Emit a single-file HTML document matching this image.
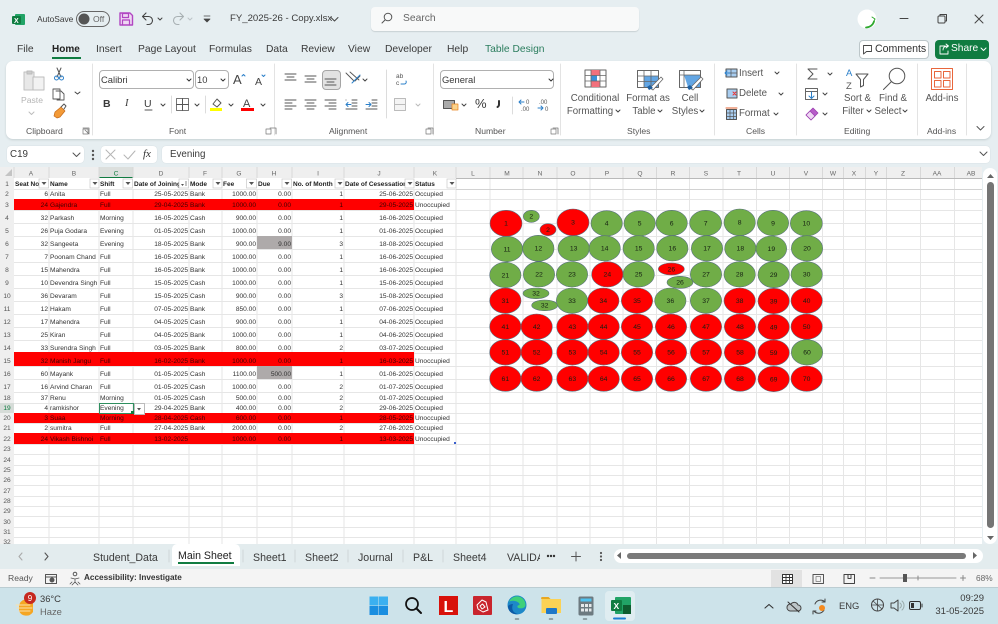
<!DOCTYPE html>
<html><head><meta charset="utf-8"><title>FY_2025-26 - Copy.xlsx</title>
<style>
html,body{margin:0;padding:0;background:#e6eef1}
#p{position:relative;width:998px;height:624px;overflow:hidden;background:#e6eef1;font-family:"Liberation Sans",sans-serif;color:#3a3a3a;filter:blur(.35px)}
.a{position:absolute}
.t{position:absolute;white-space:nowrap;font-size:10.3px;line-height:12px}
.c{transform:translateX(-50%);text-align:center}
.l{font-size:8.6px;color:#555;top:125px}
.f{font-size:9.7px;color:#555}
#sheet{position:absolute;left:0;top:167px;width:982px;height:377px;overflow:hidden;background:#fff}
table{position:absolute;left:0;top:11px;border-collapse:collapse;table-layout:fixed;width:456px}
td{padding:0 1px 0 1px;vertical-align:bottom;font-size:6.6px;line-height:8px;white-space:nowrap;overflow:hidden;color:#333}
td.n{text-align:right}
td:first-child{background:#efefef;text-align:center;color:#555;font-size:6.6px;padding:0}
tr.r td:not(:first-child):not(:last-child){background:#f00;color:#400000}
tr.h td{font-weight:bold;color:#222;background:#fff;font-size:6.5px}
tr.h td:first-child{background:#efefef;font-weight:normal;color:#555}
svg{position:absolute;left:0;top:0}
</style></head><body><div id="p">

<!-- Ribbon card & boxes -->
<div class="a" style="left:6px;top:61px;width:985px;height:78px;background:#fff;border-radius:7px;box-shadow:0 1px 2px #c5cfd2"></div>
<div class="a" style="left:371px;top:7px;width:268px;height:24px;background:#f8f9f9;border-radius:4px;box-shadow:0 1px 1px #c8d0d3"></div>
<div class="a" style="left:859px;top:40px;width:68px;height:17px;background:#fff;border:1px solid #bcc6c9;border-radius:4px"></div>
<div class="a" style="left:935px;top:40px;width:54px;height:19px;background:#107c41;border-radius:4px"></div>
<div class="a" style="left:99px;top:70px;width:93px;height:17px;border:1px solid #b0b0b0;border-radius:4px"></div>
<div class="a" style="left:195px;top:70px;width:32px;height:17px;border:1px solid #b0b0b0;border-radius:4px"></div>
<div class="a" style="left:322px;top:70px;width:17px;height:18px;border:1px solid #a5a5a5;border-radius:4px;background:#e2e2e2"></div>
<div class="a" style="left:440px;top:70px;width:112px;height:17px;border:1px solid #b0b0b0;border-radius:4px"></div>
<div class="a" style="left:7px;top:146px;width:77px;height:17px;background:#fff;border-radius:4px;box-shadow:0 0 1px #c5cfd2"></div>
<div class="a" style="left:101px;top:146px;width:56px;height:17px;background:#fff;border-radius:4px;box-shadow:0 0 1px #c5cfd2"></div>
<div class="a" style="left:162px;top:146px;width:828px;height:17px;background:#fff;border-radius:4px;box-shadow:0 0 1px #c5cfd2"></div>

<!-- Title text -->
<span class="t" style="left:37px;top:13px;font-size:8.4px">AutoSave</span>
<span class="t" style="left:93px;top:13px;font-size:8.6px;color:#666">Off</span>
<span class="t" style="left:230px;top:13px;font-size:9.6px">FY_2025-26 - Copy.xlsx</span>
<span class="t" style="left:403px;top:13px;font-size:10.3px;color:#666">Search</span>

<!-- Tabs -->
<span class="t" style="left:17px;top:44px">File</span>
<span class="t" style="left:52px;top:44px;font-weight:bold;font-size:10px;color:#222">Home</span>
<div class="a" style="left:52px;top:57px;width:29px;height:1.5px;background:#107c41"></div>
<span class="t" style="left:96px;top:44px">Insert</span>
<span class="t" style="left:138px;top:44px">Page Layout</span>
<span class="t" style="left:209px;top:44px">Formulas</span>
<span class="t" style="left:266px;top:44px">Data</span>
<span class="t" style="left:301px;top:44px">Review</span>
<span class="t" style="left:348px;top:44px">View</span>
<span class="t" style="left:385px;top:44px">Developer</span>
<span class="t" style="left:447px;top:44px">Help</span>
<span class="t" style="left:485px;top:44px;color:#2b7d5e">Table Design</span>
<span class="t" style="left:875px;top:43px;font-size:10.6px;color:#333">Comments</span>
<span class="t" style="left:951px;top:43px;font-size:10.2px;color:#fff">Share</span>

<!-- Ribbon text -->
<span class="t" style="left:21px;top:94px;font-size:8.6px;color:#b5b5b5">Paste</span>
<span class="t" style="left:101px;top:74px;font-size:9.4px">Calibri</span>
<span class="t" style="left:197px;top:74px;font-size:9.4px">10</span>
<span class="t" style="left:442px;top:74px;font-size:9.4px">General</span>
<span class="t" style="left:103px;top:98px;font-weight:bold;font-size:10.5px">B</span>
<span class="t" style="left:125px;top:98px;font-style:italic;font-size:10.5px;font-family:'Liberation Serif',serif">I</span>
<span class="t" style="left:144px;top:98px;font-size:10.5px">U</span>
<span class="t" style="left:475px;top:98px;font-size:13px">%</span>

<span class="t f" style="left:595px;top:93px;transform:translateX(-50%)">Conditional</span>
<span class="t f" style="left:590px;top:106px;transform:translateX(-50%)">Formatting</span>
<span class="t f" style="left:648px;top:93px;transform:translateX(-50%)">Format as</span>
<span class="t f" style="left:644px;top:106px;transform:translateX(-50%)">Table</span>
<span class="t f" style="left:690px;top:93px;transform:translateX(-50%)">Cell</span>
<span class="t f" style="left:685px;top:106px;transform:translateX(-50%)">Styles</span>
<span class="t f" style="left:739px;top:68px">Insert</span>
<span class="t f" style="left:739px;top:88px">Delete</span>
<span class="t f" style="left:739px;top:108px">Format</span>
<span class="t f" style="left:857.5px;top:93px;transform:translateX(-50%)">Sort &amp;</span>
<span class="t f" style="left:853px;top:106px;transform:translateX(-50%)">Filter</span>
<span class="t f" style="left:893px;top:93px;transform:translateX(-50%)">Find &amp;</span>
<span class="t f" style="left:888px;top:106px;transform:translateX(-50%)">Select</span>
<span class="t f" style="left:942px;top:93px;transform:translateX(-50%)">Add-ins</span>

<span class="t l" style="left:26px">Clipboard</span>
<span class="t l" style="left:169px">Font</span>
<span class="t l" style="left:329px">Alignment</span>
<span class="t l" style="left:475px">Number</span>
<span class="t l" style="left:627px">Styles</span>
<span class="t l" style="left:746px">Cells</span>
<span class="t l" style="left:844px">Editing</span>
<span class="t l" style="left:927px">Add-ins</span>

<!-- Formula bar text -->
<span class="t" style="left:10px;top:149px;font-size:9.8px">C19</span>
<span class="t" style="left:170px;top:149px;font-size:9.8px">Evening</span>
<span class="t" style="left:143px;top:148px;font-size:11px;font-style:italic;font-family:'Liberation Serif',serif;color:#333">fx</span>

<!-- Sheet -->
<div id="sheet">
<svg width="982" height="377" style="left:0;top:0">
<rect x="0" y="0" width="982" height="11" fill="#efefef"/>
<rect x="99" y="0" width="34" height="11" fill="#dcdfdd"/>
<rect x="0" y="0" width="14" height="377" fill="#efefef"/>
<g stroke="#e6e6e6" stroke-width="1" fill="none">
<path d="M49 11V377M99 11V377M133 11V377M189 11V377M222 11V377M257 11V377M292 11V377M344 11V377M414 11V377M456 11V377M490 11V377M523 11V377M557 11V377M590 11V377M623 11V377M656.500 11V377M689.500 11V377M723 11V377M756.500 11V377M789.500 11V377M822.500 11V377M843.500 11V377M865.500 11V377M886.500 11V377M920.500 11V377M954.500 11V377"/>
<path d="M14 22.500H982M14 32.500H982M14 43.500H982M14 56.500H982M14 69.500H982M14 82.500H982M14 95.500H982M14 108.500H982M14 121.500H982M14 134.500H982M14 147.500H982M14 160.500H982M14 173.500H982M14 186.500H982M14 199.500H982M14 212.500H982M14 225.500H982M14 236.500H982M14 246.500H982M14 256.500H982M14 266.500H982M14 277.500H982M14 287.500H982M14 298.500H982M14 308.500H982M14 318.500H982M14 329.500H982M14 339.500H982M14 349.500H982M14 360.500H982M14 370.500H982"/>
</g>
<path d="M14 11.500H982" stroke="#b9b9b9"/>
<path d="M456 22.500H982" stroke="#d2d2d2"/>
<path d="M99 10.500H133" stroke="#107c41"/>
<path d="M14 0V11M49 0V11M99 0V11M133 0V11M189 0V11M222 0V11M257 0V11M292 0V11M344 0V11M414 0V11M456 0V11M490 0V11M523 0V11M557 0V11M590 0V11M623 0V11M656.500 0V11M689.500 0V11M723 0V11M756.500 0V11M789.500 0V11M822.500 0V11M843.500 0V11M865.500 0V11M886.500 0V11M920.500 0V11M954.500 0V11" stroke="#d8d8d8"/>
<path d="M5 9L12 9L12 2Z" fill="#c4c4c4"/>
<g font-family="Liberation Sans,sans-serif" font-size="6.6" fill="#666" text-anchor="middle">
<text x="31" y="8.500">A</text><text x="74" y="8.500">B</text><text x="116" y="8.500" fill="#107c41">C</text><text x="161" y="8.500">D</text><text x="205" y="8.500">F</text><text x="239" y="8.500">G</text><text x="274" y="8.500">H</text><text x="318" y="8.500">I</text><text x="379" y="8.500">J</text><text x="435" y="8.500">K</text><text x="473" y="8.500">L</text><text x="507" y="8.500">M</text><text x="540" y="8.500">N</text><text x="573" y="8.500">O</text><text x="607" y="8.500">P</text><text x="640" y="8.500">Q</text><text x="673" y="8.500">R</text><text x="706" y="8.500">S</text><text x="739" y="8.500">T</text><text x="773" y="8.500">U</text><text x="806" y="8.500">V</text><text x="833" y="8.500">W</text><text x="854" y="8.500">X</text><text x="876" y="8.500">Y</text><text x="903" y="8.500">Z</text><text x="937" y="8.500">AA</text><text x="971" y="8.500">AB</text>
</g>
</svg>
<table>
<colgroup><col style="width:14px"><col style="width:35px"><col style="width:50px"><col style="width:34px"><col style="width:56px"><col style="width:33px"><col style="width:35px"><col style="width:35px"><col style="width:52px"><col style="width:70px"><col style="width:42px"></colgroup>
<tr class="h" style="height:11px"><td>1</td><td>Seat No</td><td>Name</td><td>Shift</td><td>Date of Joining</td><td>Mode</td><td>Fee</td><td>Due</td><td>No. of Month</td><td>Date of Cesessation</td><td>Status</td></tr>
<tr style="height:10px"><td>2</td><td class="n">6</td><td>Anita</td><td>Full</td><td class="n">25-05-2025</td><td>Bank</td><td class="n">1000.00</td><td class="n">0.00</td><td class="n">1</td><td class="n">25-06-2025</td><td>Occupied</td></tr>
<tr class="r" style="height:11px"><td>3</td><td class="n">24</td><td>Gajendra</td><td>Full</td><td class="n">29-04-2025</td><td>Bank</td><td class="n">1000.00</td><td class="n">0.00</td><td class="n">1</td><td class="n">29-05-2025</td><td>Unoccupied</td></tr>
<tr style="height:13px"><td>4</td><td class="n">32</td><td>Parkash</td><td>Morning</td><td class="n">16-05-2025</td><td>Cash</td><td class="n">900.00</td><td class="n">0.00</td><td class="n">1</td><td class="n">16-06-2025</td><td>Occupied</td></tr>
<tr style="height:13px"><td>5</td><td class="n">26</td><td>Puja Godara</td><td>Evening</td><td class="n">01-05-2025</td><td>Cash</td><td class="n">1000.00</td><td class="n">0.00</td><td class="n">1</td><td class="n">01-06-2025</td><td>Occupied</td></tr>
<tr style="height:13px"><td>6</td><td class="n">32</td><td>Sangeeta</td><td>Evening</td><td class="n">18-05-2025</td><td>Bank</td><td class="n">900.00</td><td class="n" style="background:#aeaaaa;color:#333">9.00</td><td class="n">3</td><td class="n">18-08-2025</td><td>Occupied</td></tr>
<tr style="height:13px"><td>7</td><td class="n">7</td><td>Poonam Chand</td><td>Full</td><td class="n">16-05-2025</td><td>Bank</td><td class="n">1000.00</td><td class="n">0.00</td><td class="n">1</td><td class="n">16-06-2025</td><td>Occupied</td></tr>
<tr style="height:13px"><td>8</td><td class="n">15</td><td>Mahendra</td><td>Full</td><td class="n">16-05-2025</td><td>Bank</td><td class="n">1000.00</td><td class="n">0.00</td><td class="n">1</td><td class="n">16-06-2025</td><td>Occupied</td></tr>
<tr style="height:13px"><td>9</td><td class="n">10</td><td>Devendra Singh</td><td>Full</td><td class="n">15-05-2025</td><td>Cash</td><td class="n">1000.00</td><td class="n">0.00</td><td class="n">1</td><td class="n">15-06-2025</td><td>Occupied</td></tr>
<tr style="height:13px"><td>10</td><td class="n">36</td><td>Devaram</td><td>Full</td><td class="n">15-05-2025</td><td>Cash</td><td class="n">900.00</td><td class="n">0.00</td><td class="n">3</td><td class="n">15-08-2025</td><td>Occupied</td></tr>
<tr style="height:13px"><td>11</td><td class="n">12</td><td>Hakam</td><td>Full</td><td class="n">07-05-2025</td><td>Bank</td><td class="n">850.00</td><td class="n">0.00</td><td class="n">1</td><td class="n">07-06-2025</td><td>Occupied</td></tr>
<tr style="height:13px"><td>12</td><td class="n">17</td><td>Mahendra</td><td>Full</td><td class="n">04-05-2025</td><td>Cash</td><td class="n">900.00</td><td class="n">0.00</td><td class="n">1</td><td class="n">04-06-2025</td><td>Occupied</td></tr>
<tr style="height:13px"><td>13</td><td class="n">25</td><td>Kiran</td><td>Full</td><td class="n">04-05-2025</td><td>Bank</td><td class="n">1000.00</td><td class="n">0.00</td><td class="n">1</td><td class="n">04-06-2025</td><td>Occupied</td></tr>
<tr style="height:13px"><td>14</td><td class="n">33</td><td>Surendra Singh</td><td>Full</td><td class="n">03-05-2025</td><td>Bank</td><td class="n">800.00</td><td class="n">0.00</td><td class="n">2</td><td class="n">03-07-2025</td><td>Occupied</td></tr>
<tr class="r" style="height:13px"><td>15</td><td class="n">32</td><td>Manish Jangu</td><td>Full</td><td class="n">16-02-2025</td><td>Bank</td><td class="n">1000.00</td><td class="n">0.00</td><td class="n">1</td><td class="n">16-03-2025</td><td>Unoccupied</td></tr>
<tr style="height:13px"><td>16</td><td class="n">60</td><td>Mayank</td><td>Full</td><td class="n">01-05-2025</td><td>Cash</td><td class="n">1100.00</td><td class="n" style="background:#aeaaaa;color:#333">500.00</td><td class="n">1</td><td class="n">01-06-2025</td><td>Occupied</td></tr>
<tr style="height:13px"><td>17</td><td class="n">16</td><td>Arvind Charan</td><td>Full</td><td class="n">01-05-2025</td><td>Cash</td><td class="n">1000.00</td><td class="n">0.00</td><td class="n">2</td><td class="n">01-07-2025</td><td>Occupied</td></tr>
<tr style="height:11px"><td>18</td><td class="n">37</td><td>Renu</td><td>Morning</td><td class="n">01-05-2025</td><td>Cash</td><td class="n">500.00</td><td class="n">0.00</td><td class="n">2</td><td class="n">01-07-2025</td><td>Occupied</td></tr>
<tr style="height:10px"><td style="background:#d6dcd8;color:#107c41">19</td><td class="n">4</td><td>ramkishor</td><td>Evening</td><td class="n">29-04-2025</td><td>Bank</td><td class="n">400.00</td><td class="n">0.00</td><td class="n">2</td><td class="n">29-06-2025</td><td>Occupied</td></tr>
<tr class="r" style="height:10px"><td>20</td><td class="n">3</td><td>Suaa</td><td>Morning</td><td class="n">28-04-2025</td><td>Cash</td><td class="n">600.00</td><td class="n">0.00</td><td class="n">1</td><td class="n">28-05-2025</td><td>Unoccupied</td></tr>
<tr style="height:10px"><td>21</td><td class="n">2</td><td>sumitra</td><td>Full</td><td class="n">27-04-2025</td><td>Bank</td><td class="n">2000.00</td><td class="n">0.00</td><td class="n">2</td><td class="n">27-06-2025</td><td>Occupied</td></tr>
<tr class="r" style="height:11px"><td>22</td><td class="n">24</td><td>Vikash Bishnoi</td><td>Full</td><td class="n">13-02-2025</td><td></td><td class="n">1000.00</td><td class="n">0.00</td><td class="n">1</td><td class="n">13-03-2025</td><td>Unoccupied</td></tr>
<tr style="height:10px"><td>23</td></tr>
<tr style="height:11px"><td>24</td></tr>
<tr style="height:10px"><td>25</td></tr>
<tr style="height:10px"><td>26</td></tr>
<tr style="height:11px"><td>27</td></tr>
<tr style="height:10px"><td>28</td></tr>
<tr style="height:10px"><td>29</td></tr>
<tr style="height:11px"><td>30</td></tr>
<tr style="height:10px"><td>31</td></tr>
<tr style="height:10px"><td>32</td></tr>
</table>
<div class="a" style="left:14px;top:185px;width:400px;height:1px;background:#f00"></div>
<!-- filter buttons -->
<svg width="982" height="30" style="left:0;top:0">
<g fill="#fff" stroke="#c8c8c8" stroke-width=".7">
<rect x="39" y="12" width="9.500" height="9"/><rect x="90" y="12" width="9" height="9"/><rect x="123" y="12" width="9.500" height="9"/><rect x="179" y="12" width="9.500" height="9"/><rect x="213" y="12" width="9" height="9"/><rect x="246.500" y="12" width="10" height="9"/><rect x="282" y="12" width="9.500" height="9"/><rect x="335" y="12" width="9" height="9"/><rect x="405" y="12" width="9" height="9"/><rect x="447" y="12" width="9" height="9"/>
</g>
<g fill="#555"><path d="M41.500 15h5l-2.500 3zM92.500 15h5l-2.500 3zM125.500 15h5l-2.500 3zM215.500 15h5l-2.500 3zM249 15h5l-2.500 3zM284.500 15h5l-2.500 3zM337.500 15h5l-2.500 3zM407.500 15h5l-2.500 3zM449.500 15h5l-2.500 3zM181 17h3l-1.500 2z"/><path d="M186 14v5" stroke="#555" stroke-width=".7"/></g>
</svg>
<!-- selected cell -->
<div class="a" style="left:99px;top:236px;width:33px;height:9px;border:1px solid #2f8f5f;box-sizing:content-box"></div>
<div class="a" style="left:131px;top:244px;width:3px;height:3px;background:#107c41"></div>
<div class="a" style="left:134px;top:236px;width:9px;height:10px;border:1px solid #bbb;background:#fff"></div>
<svg width="10" height="10" style="left:135px;top:237px"><path d="M2 4h4L4 6.500z" fill="#555"/></svg>
<div class="a" style="left:454px;top:274.500px;width:2px;height:2px;background:#3a5fcd"></div>
<!-- shapes -->
<svg viewBox="0 0 1050 615" width="350" height="205" style="left:480px;top:28px">
<g stroke="#566d7e" stroke-width="1.700">
<g fill="#70ad47">
<ellipse cx="154" cy="64" rx="24" ry="18"/><ellipse cx="380" cy="85" rx="47" ry="38"/><ellipse cx="479" cy="85" rx="47" ry="38"/><ellipse cx="575" cy="84" rx="47" ry="38"/><ellipse cx="677" cy="84" rx="48" ry="38"/><ellipse cx="779" cy="82" rx="47" ry="40"/><ellipse cx="879" cy="84" rx="47" ry="38"/><ellipse cx="979" cy="85" rx="48" ry="38"/>
<ellipse cx="81" cy="162" rx="47" ry="38"/><ellipse cx="175" cy="160" rx="47" ry="39"/><ellipse cx="281" cy="160" rx="47" ry="38"/><ellipse cx="374" cy="160" rx="47" ry="38"/><ellipse cx="476" cy="160" rx="47" ry="38"/><ellipse cx="577" cy="160" rx="47" ry="38"/><ellipse cx="681" cy="160" rx="47" ry="38"/><ellipse cx="781" cy="160" rx="47" ry="38"/><ellipse cx="874" cy="161" rx="46" ry="38"/><ellipse cx="981" cy="160" rx="47" ry="38"/>
<ellipse cx="76" cy="240" rx="47" ry="38"/><ellipse cx="177" cy="238" rx="47" ry="38"/><ellipse cx="276" cy="238" rx="47" ry="38"/><ellipse cx="476" cy="238" rx="47" ry="38"/><ellipse cx="600" cy="262" rx="39" ry="18"/><ellipse cx="678" cy="238" rx="47" ry="38"/><ellipse cx="779" cy="238" rx="47" ry="38"/><ellipse cx="881" cy="239" rx="47" ry="39"/><ellipse cx="980" cy="238" rx="47" ry="38"/>
<ellipse cx="168" cy="295" rx="39" ry="16"/><ellipse cx="194" cy="331" rx="39" ry="16"/><ellipse cx="276" cy="317" rx="47" ry="38"/><ellipse cx="571" cy="317" rx="47" ry="38"/><ellipse cx="678" cy="317" rx="47" ry="38"/><ellipse cx="981" cy="472" rx="47" ry="38"/>
</g>
<g fill="#f00">
<ellipse cx="78" cy="85" rx="48" ry="39"/><ellipse cx="204" cy="104" rx="24" ry="18"/><ellipse cx="279" cy="82" rx="48" ry="40"/>
<ellipse cx="382" cy="238" rx="47" ry="38"/><ellipse cx="574" cy="222" rx="39" ry="18"/>
<ellipse cx="76" cy="317" rx="47" ry="38"/><ellipse cx="370" cy="317" rx="47" ry="38"/><ellipse cx="471" cy="317" rx="47" ry="38"/><ellipse cx="779" cy="317" rx="47" ry="38"/><ellipse cx="881" cy="318" rx="47" ry="38"/><ellipse cx="980" cy="317" rx="47" ry="38"/>
<ellipse cx="76" cy="395" rx="47" ry="38"/><ellipse cx="170" cy="395" rx="47" ry="38"/><ellipse cx="277" cy="395" rx="47" ry="38"/><ellipse cx="371" cy="395" rx="47" ry="38"/><ellipse cx="471" cy="395" rx="47" ry="38"/><ellipse cx="573" cy="395" rx="47" ry="38"/><ellipse cx="678" cy="395" rx="47" ry="38"/><ellipse cx="780" cy="395" rx="47" ry="38"/><ellipse cx="881" cy="396" rx="47" ry="38"/><ellipse cx="980" cy="395" rx="47" ry="38"/>
<ellipse cx="76" cy="472" rx="47" ry="38"/><ellipse cx="170" cy="472" rx="47" ry="38"/><ellipse cx="277" cy="472" rx="47" ry="38"/><ellipse cx="371" cy="472" rx="47" ry="38"/><ellipse cx="471" cy="472" rx="47" ry="38"/><ellipse cx="573" cy="472" rx="47" ry="38"/><ellipse cx="678" cy="472" rx="47" ry="38"/><ellipse cx="780" cy="472" rx="47" ry="38"/><ellipse cx="881" cy="473" rx="47" ry="38"/>
<ellipse cx="76" cy="551" rx="47" ry="38"/><ellipse cx="170" cy="551" rx="47" ry="38"/><ellipse cx="277" cy="551" rx="47" ry="38"/><ellipse cx="371" cy="551" rx="47" ry="38"/><ellipse cx="471" cy="551" rx="47" ry="38"/><ellipse cx="573" cy="551" rx="47" ry="38"/><ellipse cx="678" cy="551" rx="47" ry="38"/><ellipse cx="780" cy="551" rx="47" ry="38"/><ellipse cx="881" cy="552" rx="47" ry="38"/><ellipse cx="980" cy="551" rx="47" ry="38"/>
</g></g>
<g font-family="Liberation Sans,sans-serif" font-size="20.500" fill="#152012" text-anchor="middle">
<text x="78" y="92">1</text><text x="154" y="71">2</text><text x="204" y="111">2</text><text x="279" y="89">3</text><text x="380" y="92">4</text><text x="479" y="92">5</text><text x="575" y="91">6</text><text x="677" y="91">7</text><text x="779" y="89">8</text><text x="879" y="91">9</text><text x="979" y="92">10</text>
<text x="81" y="169">11</text><text x="175" y="167">12</text><text x="281" y="167">13</text><text x="374" y="167">14</text><text x="476" y="167">15</text><text x="577" y="167">16</text><text x="681" y="167">17</text><text x="781" y="167">18</text><text x="874" y="168">19</text><text x="981" y="167">20</text>
<text x="76" y="247">21</text><text x="177" y="245">22</text><text x="276" y="245">23</text><text x="382" y="245">24</text><text x="476" y="245">25</text><text x="574" y="229">26</text><text x="600" y="269">26</text><text x="678" y="245">27</text><text x="779" y="245">28</text><text x="881" y="246">29</text><text x="980" y="245">30</text>
<text x="76" y="324">31</text><text x="168" y="302">32</text><text x="194" y="338">32</text><text x="276" y="324">33</text><text x="370" y="324">34</text><text x="471" y="324">35</text><text x="571" y="324">36</text><text x="678" y="324">37</text><text x="779" y="324">38</text><text x="881" y="325">39</text><text x="980" y="324">40</text>
<text x="76" y="402">41</text><text x="170" y="402">42</text><text x="277" y="402">43</text><text x="371" y="402">44</text><text x="471" y="402">45</text><text x="573" y="402">46</text><text x="678" y="402">47</text><text x="780" y="402">48</text><text x="881" y="403">49</text><text x="980" y="402">50</text>
<text x="76" y="479">51</text><text x="170" y="479">52</text><text x="277" y="479">53</text><text x="371" y="479">54</text><text x="471" y="479">55</text><text x="573" y="479">56</text><text x="678" y="479">57</text><text x="780" y="479">58</text><text x="881" y="480">59</text><text x="981" y="479">60</text>
<text x="76" y="558">61</text><text x="170" y="558">62</text><text x="277" y="558">63</text><text x="371" y="558">64</text><text x="471" y="558">65</text><text x="573" y="558">66</text><text x="678" y="558">67</text><text x="780" y="558">68</text><text x="881" y="559">69</text><text x="980" y="558">70</text>
</g>
</svg>
</div>

<!-- Scrollbar v -->
<div class="a" style="left:983px;top:168px;width:14px;height:376px;background:#fff;border-radius:7px"></div>
<div class="a" style="left:987px;top:182px;width:7px;height:346px;background:#757575;border-radius:3.500px"></div>

<!-- Bottom tab strip -->
<div class="a" style="left:0;top:544px;width:998px;height:25px;background:#e3ecee"></div>
<div class="a" style="left:172px;top:544px;width:68px;height:22px;background:#fff;border-radius:5px 5px 0 0"></div>
<div class="a" style="left:178px;top:562px;width:56px;height:2px;background:#107c41"></div>
<span class="t" style="left:93px;top:552px;font-size:10.6px">Student_Data</span>
<span class="t" style="left:178px;top:550px;font-size:10.6px;color:#222">Main Sheet</span>
<span class="t" style="left:253px;top:552px;font-size:10.6px">Sheet1</span>
<span class="t" style="left:305px;top:552px;font-size:10.6px">Sheet2</span>
<span class="t" style="left:358px;top:552px;font-size:10.6px">Journal</span>
<span class="t" style="left:413px;top:552px;font-size:10.6px">P&amp;L</span>
<span class="t" style="left:453px;top:552px;font-size:10.6px">Sheet4</span>
<div class="a" style="left:507px;top:552px;width:33px;overflow:hidden;height:13px"><span class="t" style="left:0;top:0;font-size:10.6px">VALIDATION</span></div>
<div class="a" style="left:614px;top:549px;width:369px;height:14px;background:#fff;border-radius:7px"></div>
<div class="a" style="left:627px;top:553px;width:339px;height:6px;background:#7a7a7a;border-radius:3px"></div>

<!-- Status bar -->
<div class="a" style="left:0;top:569px;width:998px;height:18px;background:#f4f4f4"></div>
<div class="a" style="left:771px;top:570px;width:31px;height:17px;background:#e2e2e2"></div>
<span class="t" style="left:8px;top:572px;font-size:8.6px;color:#555">Ready</span>
<span class="t" style="left:84px;top:572px;font-size:8.2px;font-weight:bold;color:#333">Accessibility: Investigate</span>
<span class="t" style="left:976px;top:572px;font-size:8.3px;color:#666">68%</span>

<!-- Taskbar -->
<div class="a" style="left:0;top:587px;width:998px;height:37px;background:#cde3ea;border-top:1px solid #bccdd2;box-sizing:border-box"></div>
<div class="a" style="left:605px;top:591px;width:30px;height:30px;background:#dfedf1;border-radius:4px"></div>
<span class="t" style="left:40px;top:593px;font-size:9.4px">36°C</span>
<span class="t" style="left:40px;top:606px;font-size:9.4px;color:#666">Haze</span>
<span class="t" style="left:839px;top:600px;font-size:9.4px">ENG</span>
<span class="t" style="left:960px;top:593px;width:24px;text-align:right;font-size:9.5px">09:29</span>
<span class="t" style="left:935px;top:606px;width:49px;text-align:right;font-size:9.5px">31-05-2025</span>

<!-- Icons -->
<svg width="998" height="624" fill="none" stroke-linecap="round" stroke-linejoin="round">
<!-- Excel logo -->
<rect x="15" y="14" width="10" height="11" rx="1" fill="#21a366"/><rect x="12" y="16" width="9" height="8" rx="1" fill="#107c41"/>
<text x="14" y="23" font-size="7" font-weight="bold" fill="#fff" font-family="Liberation Sans,sans-serif">X</text>
<!-- Toggle -->
<rect x="76.500" y="11.500" width="33" height="15" rx="7.500" stroke="#666"/><circle cx="84" cy="19" r="5.500" fill="#555"/>
<!-- Save -->
<path d="M120 13h10l2.500 2.500V25h-12.500z" stroke="#b146c2" stroke-width="1.400" fill="#efd8f3"/><path d="M122.500 13.500h6v4h-6zM122.500 25v-5h7v5" stroke="#b146c2" stroke-width="1.200"/>
<!-- Undo/Redo -->
<path d="M146 13l-3.500 3.500 3.500 3.500M143 16.500h5.500a4 4 0 010 8H147" stroke="#444" stroke-width="1.100"/>
<path d="M158 18l2 2 2-2" stroke="#444"/>
<path d="M180 13l3.500 3.500-3.500 3.500M183 16.500h-5.500a4 4 0 000 8H179" stroke="#a8b0b3" stroke-width="1.100"/>
<path d="M188 18l2 2 2-2" stroke="#bcc3c6"/>
<path d="M204 16h6M204 19h6l-3 3z" stroke="#444" fill="#444" stroke-width=".8"/>
<path d="M331 17.500l3.500 3.500 3.500-3.500" stroke="#444"/>
<!-- search -->
<circle cx="388" cy="17" r="3.800" stroke="#555"/><path d="M385 20l-3 3" stroke="#555"/>
<!-- user -->
<circle cx="867" cy="19" r="9.500" fill="#fff"/><path d="M866 27.500a8.500 8.500 0 008-6" stroke="#2ea82e" stroke-width="1.800"/><path d="M872 17l3 2-1.500 3" stroke="#2ea82e"/>
<!-- window buttons -->
<path d="M900 18.500h8" stroke="#444"/>
<rect x="938" y="16" width="7" height="7" rx="1" stroke="#444"/><path d="M940 16v-1.500h6.500v6.500H945" stroke="#444"/>
<path d="M975 15l8 8M983 15l-8 8" stroke="#444"/>
<!-- comments & share icons -->
<path d="M863.500 45.500h8v6h-5l-3 2.500z" stroke="#444" stroke-width=".9"/>
<path d="M945 46h-5v8h8v-3M943 50c0-3 2-4 5-4M946 44l2.500 2-2.500 2" stroke="#fff" stroke-width=".9"/>
<path d="M981 48l2.500 2.500L986 48" stroke="#fff"/>
<!-- separators -->
<path d="M92.500 64v71M274.500 64v71M433.500 64v71M560.500 64v71M714.500 64v71M796.500 64v71M917.500 64v71M966.500 64v71" stroke="#e3e3e3"/>
<path d="M171.500 96v17M205.500 96v17M386.500 70v48M512.500 97v17" stroke="#dcdcdc"/>
<!-- Paste -->
<rect x="24" y="72" width="10" height="18" fill="#e8e8e8" stroke="#c0c0c0"/><rect x="33" y="77" width="11" height="13" fill="#f2f2f2" stroke="#bdbdbd"/><path d="M27 71h5v3h-5z" fill="#ccc" stroke="#bbb"/>
<path d="M29 112l2.500 2.500 2.500-2.500" stroke="#bdbdbd"/>
<!-- Cut / copy / painter -->
<path d="M57 68l4 9M61 68l-4 9" stroke="#555"/><circle cx="56.500" cy="78" r="2" stroke="#2a7fc9"/><circle cx="61.500" cy="78" r="2" stroke="#2a7fc9"/>
<path d="M53 89h7v10h-7zM56 91h5l3 3v6h-7" stroke="#555" stroke-width=".9" fill="#fff"/>
<path d="M75 92l2.500 2 2.500-2" stroke="#444"/>
<path d="M55 112l6-5 4 4-5 6-3 1-3-2z" fill="#f39a37" stroke="#c46a1a" stroke-width=".7"/><path d="M61 107l3-3 2 2-2 3" stroke="#555"/>
<path d="M83 128h6v6M85 130l4 4" stroke="#777" stroke-width=".8"/><rect x="83" y="129" width="5" height="5" stroke="#777" stroke-width=".7"/>
<!-- font chevrons -->
<path d="M187 79l2 2 2-2M221 79l2 2 2-2" stroke="#333"/>
<text x="233" y="84" font-size="13" fill="#444" font-family="Liberation Sans,sans-serif">A</text><path d="M242 76l1.500-1.500 1.500 1.500" stroke="#2a7fc9"/>
<text x="255" y="85" font-size="10.500" fill="#444" font-family="Liberation Sans,sans-serif">A</text><path d="M262 75l1.500 1.500 1.500-1.500" stroke="#2a7fc9"/>
<path d="M161 104l2 2 2-2M195 104l2 2 2-2M229 104l2 2 2-2M261 104l2 2 2-2" stroke="#444"/>
<path d="M145 110h7" stroke="#555"/>
<rect x="176.500" y="98.500" width="12" height="12" stroke="#777"/><path d="M182.500 98.500v12M176.500 104.500h12" stroke="#555"/>
<path d="M213 104l4-5 4 4-4 4z" stroke="#555" fill="#fff"/><rect x="210" y="108" width="12" height="3" fill="#ffff00"/>
<text x="243" y="107" font-size="11" fill="#444" font-family="Liberation Sans,sans-serif">A</text><rect x="241" y="108" width="13" height="3" fill="#f00"/>
<path d="M270 128h6v6" stroke="#777" stroke-width=".8"/><rect x="266" y="129" width="5" height="5" stroke="#777" stroke-width=".7"/>
<!-- Alignment -->
<path d="M285 74h11M287 77h7M285 80h11" stroke="#555"/>
<path d="M305 76h11M307 79h7M305 82h11" stroke="#555"/>
<path d="M325 79h11M327 82h7M325 85h11" stroke="#555"/>
<path d="M346 73l8 8M350 72l9 8M360 76l-5 5" stroke="#555" stroke-width=".9"/><path d="M352 83l8-8" stroke="#2a7fc9"/>
<path d="M363 79l2 2 2-2" stroke="#444"/>
<text x="396" y="78" font-size="6.500" fill="#555" font-family="Liberation Sans,sans-serif">ab</text><text x="396" y="85" font-size="6.500" fill="#555" font-family="Liberation Sans,sans-serif">c</text><path d="M401 84h3a2 2 0 002-3" stroke="#2a7fc9"/>
<path d="M285 100h11M285 103h7M285 106h11M285 109h7M305 100h11M307 103h7M305 106h11M307 109h7M325 100h11M329 103h7M325 106h11M329 109h7" stroke="#555"/>
<path d="M352 100h5M352 103h5M352 106h5M346 109h11M346 100h0" stroke="#555"/><path d="M351 104.500h-5M348 102.500l-2 2 2 2" stroke="#2a7fc9"/>
<path d="M372 100h5M372 103h5M372 106h5M366 109h11" stroke="#555"/><path d="M366 104.500h5M369 102.500l2 2-2 2" stroke="#2a7fc9"/>
<rect x="394.500" y="98.500" width="11" height="12" stroke="#bbb" fill="#f4f4f4"/><path d="M394.500 104.500h11" stroke="#bbb"/>
<path d="M416 104l2 2 2-2" stroke="#bbb"/>
<path d="M428 128h5v6" stroke="#777" stroke-width=".8"/><rect x="426" y="129" width="5" height="5" stroke="#777" stroke-width=".7"/>
<!-- Number -->
<path d="M549 79l2 2 2-2" stroke="#333"/>
<rect x="443.500" y="100.500" width="11" height="8" fill="#aaa" stroke="#555"/><rect x="452" y="104" width="6" height="6" fill="#fbd38d" stroke="#e8821c" stroke-width=".7"/>
<path d="M462 104l2 2 2-2" stroke="#444"/>
<path d="M499 101v3a3 3 0 01-1.500 3" stroke="#333" stroke-width="2"/>
<text x="526" y="104" font-size="6" fill="#555" font-family="Liberation Sans,sans-serif">0</text><text x="521" y="111" font-size="6" fill="#555" font-family="Liberation Sans,sans-serif">.00</text><path d="M524 102h-5M521 100l-2 2 2 2" stroke="#2a7fc9"/>
<text x="539" y="104" font-size="6" fill="#555" font-family="Liberation Sans,sans-serif">.00</text><text x="545" y="111" font-size="6" fill="#555" font-family="Liberation Sans,sans-serif">0</text><path d="M538 108h5M541 106l2 2-2 2" stroke="#2a7fc9"/>
<path d="M553 128h5v6" stroke="#777" stroke-width=".8"/><rect x="551" y="129" width="5" height="5" stroke="#777" stroke-width=".7"/>
<!-- Conditional -->
<rect x="585" y="70" width="21" height="17" fill="#fff" stroke="#666"/>
<path d="M591 70h9v5.500h-9z" fill="#f1707c"/><path d="M591 81h9v6h-9z" fill="#f1707c"/><path d="M591 75.500h6v5.500h-6z" fill="#3a90d8"/>
<path d="M585 75.500h21M585 81h21M591 70v17M600 70v17" stroke="#666" stroke-width=".8"/>
<path d="M616 110l2 2 2-2" stroke="#444"/>
<!-- Format as table -->
<rect x="637.500" y="70.500" width="21" height="17" fill="#fff" stroke="#666"/><path d="M644 76h14v11h-14z" fill="#63a6e4"/><path d="M637.500 76h21M637.500 81.500h21M644 70.500v17M651 70.500v17" stroke="#666" stroke-width=".8"/>
<path d="M650 88l11-11 2 2-10 11z" fill="#fff" stroke="#666" stroke-width=".8"/><path d="M647 87l3-2 3 3-4 2z" fill="#1f5f9f"/>
<path d="M658 110l2 2 2-2" stroke="#444"/>
<!-- cell styles -->
<rect x="679.500" y="70.500" width="21" height="17" fill="#fff" stroke="#666"/><path d="M684 75h16v12h-12z" fill="#63a6e4"/><path d="M679.500 75h21M684 70.500v17" stroke="#666" stroke-width=".8"/>
<path d="M690 88l11-11 2 2-10 11z" fill="#fff" stroke="#666" stroke-width=".8"/><path d="M687 87l3-2 3 3-4 2z" fill="#1f5f9f"/>
<path d="M700 110l2 2 2-2" stroke="#444"/>
<!-- Cells -->
<rect x="726" y="69" width="11" height="8" fill="#a8cdf0" stroke="#555"/><path d="M731 69v8M726 73h11" stroke="#555" stroke-width=".7"/><path d="M730 73h-5M727 71l-2 2 2 2" stroke="#2a7fc9"/>
<path d="M775 72l2 2 2-2" stroke="#444"/>
<rect x="727" y="89" width="10" height="9" stroke="#555" fill="#a8cdf0"/><path d="M733 92l3 3M736 92l-3 3" stroke="#e33"/>
<path d="M779 93l2 2 2-2" stroke="#444"/>
<rect x="726.500" y="109.500" width="10" height="10" stroke="#555" fill="#a8cdf0"/><path d="M726.500 113h10M726.500 116.500h10M730 109.500v10M733.500 109.500v10" stroke="#555" stroke-width=".7"/><path d="M726 108h11" stroke="#e06030"/>
<path d="M774 113l2 2 2-2" stroke="#444"/>
<!-- Editing -->
<path d="M817 69h-9l5 5-5 5h9" stroke="#555"/>
<path d="M828 73l2 2 2-2" stroke="#444"/>
<rect x="805.500" y="88.500" width="12" height="11" stroke="#666"/><path d="M805.500 91.500h12" stroke="#666"/><path d="M811.500 92v6M809 96l2.500 2.500 2.500-2.500" stroke="#2a7fc9"/>
<path d="M823 93l2 2 2-2M823 113l2 2 2-2" stroke="#444"/>
<path d="M806 115l7-7 5 5-7 7z" fill="#b75cc9" stroke="#9c3fb0" stroke-width=".8"/><path d="M806 115l4-4 5 5-4 4z" fill="#efd8f3" stroke="#9c3fb0" stroke-width=".8"/>
<text x="846" y="76" font-size="9.500" fill="#2a7fc9" font-family="Liberation Sans,sans-serif">A</text><text x="846" y="89" font-size="9.500" fill="#555" font-family="Liberation Sans,sans-serif">Z</text>
<path d="M856 74h12l-4.500 5.500v6l-3 1.500v-7.500z" stroke="#555"/>
<circle cx="897" cy="76" r="7.800" stroke="#555"/><path d="M891.500 81.500l-8 8" stroke="#555"/>
<path d="M867 110l2 2 2-2M903 110l2 2 2-2" stroke="#444"/>
<!-- Add-ins -->
<rect x="931.500" y="68.500" width="21" height="21" stroke="#e8663c"/><rect x="934.500" y="71.500" width="6.500" height="6.500" stroke="#e8663c"/><rect x="943.500" y="71.500" width="6.500" height="6.500" stroke="#e8663c"/><rect x="934.500" y="80.500" width="6.500" height="6.500" stroke="#e8663c"/><rect x="943.500" y="80.500" width="6.500" height="6.500" stroke="#e8663c"/>
<path d="M977 126.500l3.500 3.500 3.500-3.500" stroke="#555"/>
<!-- Formula bar icons -->
<path d="M73 153l3.500 3.500 3.500-3.500" stroke="#555"/>
<circle cx="93" cy="151" r=".7" fill="#555" stroke="#555"/><circle cx="93" cy="155" r=".7" fill="#555" stroke="#555"/><circle cx="93" cy="159" r=".7" fill="#555" stroke="#555"/>
<path d="M106 150l9 9M115 150l-9 9" stroke="#b5b5b5"/><path d="M124 155l4 4 7-8" stroke="#b5b5b5"/>
<path d="M980 152l3.500 3.500 3.500-3.500" stroke="#555"/>
<!-- scroll arrows -->
<path d="M987 178h7l-3.500-4z" fill="#666"/><path d="M987 536h7l-3.500 4z" fill="#666"/>
<path d="M621 552v7l-4-3.500z" fill="#666"/><path d="M973 552v7l4-3.500z" fill="#666"/>
<!-- tab nav -->
<path d="M22 553l-3 3.500 3 3.500" stroke="#aaa" stroke-width="1.100"/><path d="M45 553l3 3.500-3 3.500" stroke="#555" stroke-width="1.100"/>
<path d="M169 550v12M243 550v12M295 550v12M348 550v12M403 550v12M443 550v12" stroke="#cfd6d8"/>
<circle cx="548" cy="556" r=".7" fill="#333" stroke="#333"/><circle cx="551" cy="556" r=".7" fill="#333" stroke="#333"/><circle cx="554" cy="556" r=".7" fill="#333" stroke="#333"/>
<path d="M576 552v9M571.500 556.500h9" stroke="#555"/>
<circle cx="601" cy="553" r=".6" fill="#555" stroke="#555"/><circle cx="601" cy="556.500" r=".6" fill="#555" stroke="#555"/><circle cx="601" cy="560" r=".6" fill="#555" stroke="#555"/>
<!-- status icons -->
<rect x="45.500" y="574.500" width="11" height="9" stroke="#555"/><path d="M45.500 577h11" stroke="#555"/><circle cx="52" cy="580" r="2" fill="#555" stroke="#555"/>
<circle cx="75" cy="574" r="1.800" stroke="#555"/><path d="M71 578l4 1 4-1M75 579v3l-3 3M75 582l3 3M72 582l-2 2M78 582l2 2" stroke="#555" stroke-width=".8"/>
<rect x="782.500" y="574.500" width="10" height="9" stroke="#333" fill="#fff"/><path d="M782.500 577.500h10M782.500 580.500h10M786 574.500v9M789.500 574.500v9" stroke="#333" stroke-width=".9"/>
<rect x="813" y="574.500" width="10.500" height="9" stroke="#555"/><rect x="816" y="576.500" width="4.500" height="5" stroke="#777" stroke-width=".7"/>
<path d="M844 574.500h10.500v9h-10.500zM848 574.500v4h3v-4" stroke="#444"/>
<path d="M870 578h5M960.500 578h5M963 575.500v5" stroke="#888"/>
<path d="M880 578h76" stroke="#999"/><path d="M918 576v4" stroke="#888"/>
<rect x="903" y="574" width="4" height="8" fill="#555"/>
<!-- Taskbar icons -->
<path d="M19 606a8 8 0 0114-4v10a8 8 0 01-14-1z" fill="#f5a623"/><path d="M16 605h14M17 608h15M19 611h11" stroke="#fce0a8"/>
<circle cx="30" cy="598" r="6" fill="#c6281f"/><text x="30" y="601" text-anchor="middle" font-size="8" fill="#fff" font-family="Liberation Sans,sans-serif">9</text>
<g fill="#1a8ee0"><rect x="369.500" y="596.500" width="9" height="9" fill="#3bb0f0"/><rect x="379" y="596.500" width="9" height="9" fill="#3bb0f0"/><rect x="369.500" y="606" width="9" height="9"/><rect x="379" y="606" width="9" height="9"/></g>
<circle cx="412" cy="604" r="6" stroke="#111" stroke-width="1.700"/><path d="M416.500 608.500l4.500 4.500" stroke="#111" stroke-width="2"/>
<rect x="439" y="596" width="19" height="19" fill="#d8110a"/><text x="443.500" y="612" font-size="16" font-weight="bold" fill="#fff" font-family="Liberation Sans,sans-serif">L</text>
<rect x="473" y="596" width="19" height="19" rx="1" fill="#c9252d"/><path d="M477 605l5-5 4 2 2 8-5 2-5-3zM480 606l2.500-2 2.500 3-3 2z" stroke="#fff"/>
<circle cx="517" cy="605" r="9.500" fill="#1d88c8"/><path d="M509 602a8.500 8.500 0 0116.500 3c0 3-4 4-7 3-2-1-1-3 1-3 1-3-7-6-10.500-3z" fill="#3fd07a"/><path d="M508 606c0 6 5 9 10 8-5-1-7-5-5-10-2 0-4 1-5 2z" fill="#0c5aa6"/>
<path d="M541.500 597h7l2 2h10.500v14h-19.500z" fill="#fbd255"/><path d="M541.500 597h7l2 2h-9.500z" fill="#e8a823"/><rect x="546" y="608" width="11" height="6" rx="1" fill="#1f78c8"/>
<rect x="578.500" y="596.500" width="15" height="19" rx="1.500" fill="#6d7a80"/><rect x="580.500" y="598.500" width="11" height="3" fill="#4fc3f0"/><path d="M581 604h3v3h-3zM585 604h3v3h-3zM589 604h2.500v3H589zM581 608.500h3v3h-3zM585 608.500h3v3h-3zM589 608.500h2.500v3H589z" fill="#e5e9eb"/>
<rect x="615" y="597" width="16" height="17" rx="1" fill="#21a366"/><rect x="623" y="605" width="8" height="9" fill="#0e5c2f"/><rect x="611" y="600" width="11" height="11" rx="1" fill="#107c41"/>
<text x="613.500" y="609" font-size="8.500" font-weight="bold" fill="#fff" font-family="Liberation Sans,sans-serif">X</text>
<rect x="613" y="617.500" width="13" height="2" rx="1" fill="#1b7fd4"/>
<path d="M515.500 619h3M549.500 619h3M583.500 619h3" stroke="#7c8b90" stroke-width="1.500"/>
<path d="M765 608l4-3.500 4 3.500" stroke="#333" stroke-width="1.100"/>
<path d="M790 611h8a3 3 0 000-6 4 4 0 00-7-1 3.500 3.500 0 00-1 7z" stroke="#444" fill="#bcc5c8"/><path d="M788 602l11 10" stroke="#333"/>
<path d="M815 604a6 6 0 0110-2M824 610a6 6 0 01-10 1" stroke="#444"/><path d="M825 599v3h-3M813 614v-3h3" stroke="#444"/><circle cx="822" cy="608" r="3" fill="#f58a1f"/>
<circle cx="877.500" cy="605" r="6" stroke="#444"/><path d="M871.500 605h12M877.500 599v12M873 601l9 8" stroke="#444" stroke-width=".8"/>
<path d="M891 603h3l4-3v11l-4-3h-3z" stroke="#444"/><path d="M900 603a3 3 0 010 5M902 601a6 6 0 010 9" stroke="#9aa"/>
<rect x="909.500" y="601.500" width="11" height="8" rx="1.500" stroke="#333"/><rect x="911" y="603" width="3" height="5" fill="#333"/><path d="M922 604v3" stroke="#333"/>
</svg>
</div></body></html>
